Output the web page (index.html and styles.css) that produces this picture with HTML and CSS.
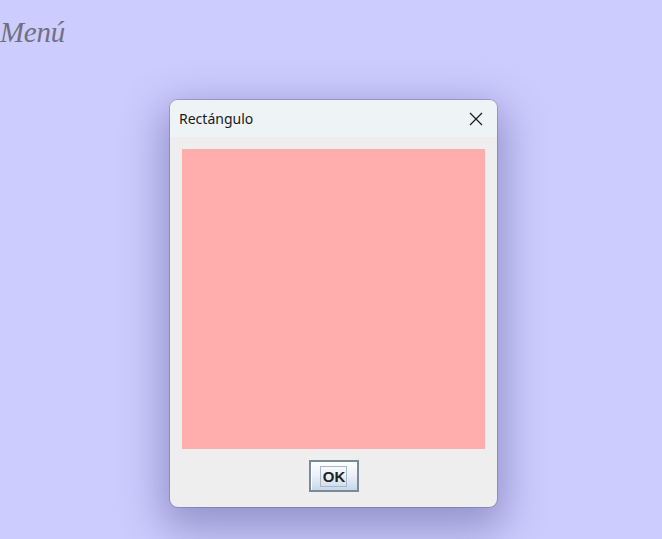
FILE: index.html
```html
<!DOCTYPE html>
<html lang="es">
<head>
<meta charset="utf-8">
<title>Menú</title>
<link rel="stylesheet" href="styles.css">
</head>
<body>
<div class="page">
  <h1 class="menu-title">Menú</h1>
  <div class="stage">
    <div class="dialog">
      <div class="titlebar">
        <span class="title">Rectángulo</span>
        <svg class="close" width="14" height="14" viewBox="0 0 14 14"><path d="M1 1 L13 13 M13 1 L1 13" stroke="#1a1a1a" stroke-width="1.2" fill="none"/></svg>
      </div>
      <div class="body">
        <div class="rect"></div>
        <div class="actions">
          <button class="ok"><span class="focus">OK</span></button>
        </div>
      </div>
    </div>
  </div>
</div>
</body>
</html>
```
FILE: styles.css
```css
html, body {
  margin: 0;
  padding: 0;
  background: #ccccff;
  height: 100%;
}
.page {
  position: relative;
  height: 539px;
  overflow: hidden;
}
.menu-title {
  margin: 0;
  padding: 15px 0 0 0;
  font-family: "Liberation Serif", serif;
  font-style: italic;
  font-weight: normal;
  font-size: 29px;
  line-height: 34px;
  color: #707080;
  letter-spacing: -0.3px;
}
.stage {
  display: flex;
  padding-left: 170px;
  padding-top: 51px;
}
.dialog {
  width: 327px;
  height: 407px;
  border-radius: 8px;
  background: #eeeeee;
  box-shadow: 0 0 0 1px rgba(90, 90, 120, 0.35), 0 14px 40px 8px rgba(70, 70, 130, 0.42);
  display: flex;
  flex-direction: column;
  overflow: hidden;
}
.titlebar {
  height: 37px;
  background: #eef3f5;
  display: flex;
  align-items: center;
  justify-content: space-between;
  padding: 0 14px 0 9px;
  flex: none;
}
.title {
  font-family: "Noto Sans", sans-serif;
  font-size: 14px;
  color: #1a1a1a;
}
.close {
  display: block;
}
.body {
  flex: 1;
  display: flex;
  flex-direction: column;
  align-items: center;
  padding-top: 12px;
}
.rect {
  width: 303px;
  height: 300px;
  background: #ffadad;
}
.actions {
  padding-top: 11px;
  display: flex;
  justify-content: center;
}
.ok {
  width: 50px;
  height: 32px;
  margin: 0;
  padding: 0;
  border: 2px solid #7a8a99;
  box-shadow: inset 1px 0 0 #ffffff;
  background: linear-gradient(to bottom, #ffffff 0%, #e8f0f8 50%, #c8d8e8 100%);
  display: flex;
  align-items: center;
  justify-content: center;
}
.focus {
  font-family: "Liberation Sans", sans-serif;
  font-weight: bold;
  font-size: 15px;
  color: #222222;
  border: 1px solid #a8b8cc;
  padding: 2px 1px 2px 2px;
  line-height: 15px;
}
```
